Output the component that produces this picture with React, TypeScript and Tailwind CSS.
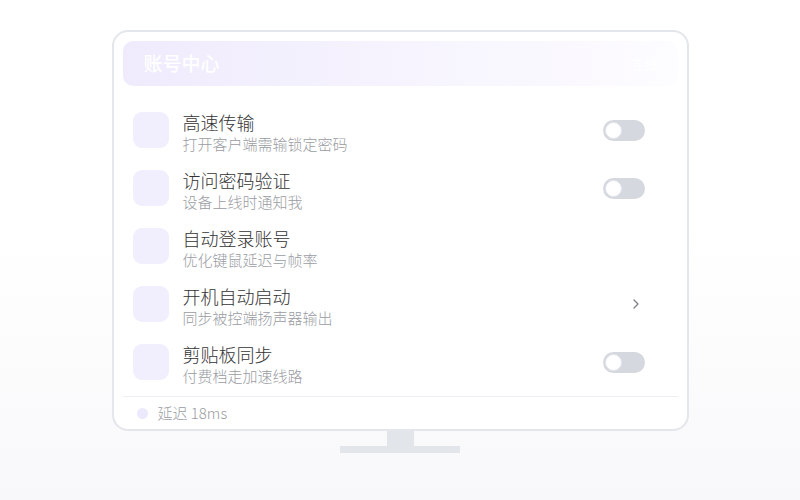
const rows = [
  { title: "高速传输", sub: "打开客户端需输锁定密码", action: "toggle" },
  { title: "访问密码验证", sub: "设备上线时通知我", action: "toggle" },
  { title: "自动登录账号", sub: "优化键鼠延迟与帧率", action: "none" },
  { title: "开机自动启动", sub: "同步被控端扬声器输出", action: "chevron" },
  { title: "剪贴板同步", sub: "付费档走加速线路", action: "toggle" },
];

const Toggle = () => (
  <div className="w-[42px] h-[21px] rounded-full bg-[#d5d8de] p-[2px] flex items-center">
    <div className="w-[17px] h-[17px] rounded-full bg-white border border-[#e3e5ea]" />
  </div>
);

const Chevron = () => (
  <svg width="6" height="10" viewBox="0 0 6 10" className="mr-[6px]">
    <polyline points="1,1 5,5 1,9" fill="none" stroke="#7b808a" strokeWidth="1.3" strokeLinecap="round" strokeLinejoin="round" />
  </svg>
);

export default function App() {
  return (
    <div
      className="w-[800px] h-[500px] bg-gradient-to-b from-white from-45% to-[#f8f8fa] pt-[30px]"
      style={{ fontFamily: '"Noto Sans CJK SC", "Noto Sans", sans-serif' }}
    >
      <div className="w-[577px] mx-auto">
        <div className="bg-white border-2 border-[#e3e6eb] rounded-[16px] px-[9px] pt-[9px]">
          <div className="h-[45px] rounded-[10px] bg-gradient-to-r from-[#efebfd] to-[#fdfcff] flex items-center justify-between pl-[21px] pr-[20px]">
            <span className="text-white text-[19px] font-medium">账号中心</span>
            <span className="text-white text-[13px]">在线</span>
          </div>
          <div className="mt-[15px]">
            {rows.map((r) => (
              <div key={r.title} className="h-[58px] flex items-center pl-[10px] pr-[33px]">
                <div className="w-[36px] h-[36px] rounded-[9px] bg-[#f1eefd]" />
                <div className="ml-[14px] flex-1 pt-[4px]">
                  <div className="text-[18px] leading-[22px] text-[#333333] font-light">{r.title}</div>
                  <div className="text-[15px] leading-[20px] text-[#9a9ca3] font-light mt-[1px]">{r.sub}</div>
                </div>
                {r.action === "toggle" && <Toggle />}
                {r.action === "chevron" && <Chevron />}
              </div>
            ))}
          </div>
          <div className="mt-[5px] border-t border-[#eceef1] h-[33px] flex items-center pl-[14px]">
            <div className="w-[11px] h-[11px] rounded-full bg-[#ece9fc]" />
            <span className="ml-[10px] text-[15px] text-[#9a9ca3] font-light">延迟 18ms</span>
          </div>
        </div>
        <div className="w-[27px] h-[15px] bg-[#e2e5ea] mx-auto" />
        <div className="w-[120px] h-[7px] bg-[#e2e5ea] mx-auto" />
      </div>
    </div>
  );
}
